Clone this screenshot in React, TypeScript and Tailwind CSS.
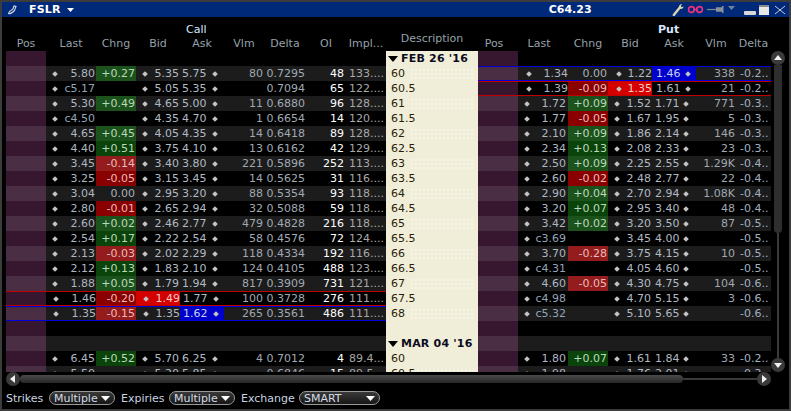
import { ReactNode } from 'react';

type CallQuote = { last: string; chng: string; bid: string; ask: string; vlm: string; delta: string; oi: string; impl: string; hl?: 'bid' | 'ask' };
type PutQuote = { last: string; chng: string; bid: string; ask: string; vlm: string; delta: string; hl?: 'bid' | 'ask' };
type Row = { strike?: string; expiry?: string; call?: CallQuote; put?: PutQuote };

const q = (last: string, chng: string, bid: string, ask: string, vlm: string, delta: string, oi: string, impl: string, hl?: 'bid' | 'ask'): CallQuote => ({ last, chng, bid, ask, vlm, delta, oi, impl, hl });
const p = (last: string, chng: string, bid: string, ask: string, vlm: string, delta: string, hl?: 'bid' | 'ask'): PutQuote => ({ last, chng, bid, ask, vlm, delta, hl });

const rows: Row[] = [
  { expiry: "FEB 26 '16" },
  { strike: '60', call: q('5.80', '+0.27', '5.35', '5.75', '80', '0.7295', '48', '133....'), put: p('1.34', '0.00', '1.22', '1.46', '338', '-0.2..', 'ask') },
  { strike: '60.5', call: q('c5.17', '', '5.05', '5.35', '', '0.7094', '65', '122....'), put: p('1.39', '-0.09', '1.35', '1.61', '21', '-0.2..', 'bid') },
  { strike: '61', call: q('5.30', '+0.49', '4.65', '5.00', '11', '0.6880', '96', '128....'), put: p('1.72', '+0.09', '1.52', '1.71', '771', '-0.3..') },
  { strike: '61.5', call: q('c4.50', '', '4.35', '4.70', '1', '0.6654', '14', '120....'), put: p('1.77', '-0.05', '1.67', '1.95', '5', '-0.3..') },
  { strike: '62', call: q('4.65', '+0.45', '4.05', '4.35', '14', '0.6418', '89', '128....'), put: p('2.10', '+0.09', '1.86', '2.14', '146', '-0.3..') },
  { strike: '62.5', call: q('4.40', '+0.51', '3.75', '4.10', '13', '0.6162', '42', '129....'), put: p('2.34', '+0.13', '2.08', '2.33', '23', '-0.3..') },
  { strike: '63', call: q('3.45', '-0.14', '3.40', '3.80', '221', '0.5896', '252', '113....'), put: p('2.50', '+0.09', '2.25', '2.55', '1.29K', '-0.4..') },
  { strike: '63.5', call: q('3.25', '-0.05', '3.15', '3.45', '14', '0.5625', '31', '116....'), put: p('2.60', '-0.02', '2.48', '2.77', '22', '-0.4..') },
  { strike: '64', call: q('3.04', '0.00', '2.95', '3.20', '88', '0.5354', '93', '118....'), put: p('2.90', '+0.04', '2.70', '2.94', '1.08K', '-0.4..') },
  { strike: '64.5', call: q('2.80', '-0.01', '2.65', '2.94', '32', '0.5088', '59', '118....'), put: p('3.20', '+0.07', '2.95', '3.40', '48', '-0.4..') },
  { strike: '65', call: q('2.60', '+0.02', '2.46', '2.77', '479', '0.4828', '216', '118....'), put: p('3.42', '+0.02', '3.20', '3.50', '87', '-0.5..') },
  { strike: '65.5', call: q('2.54', '+0.17', '2.22', '2.54', '58', '0.4576', '72', '124....'), put: p('c3.69', '', '3.45', '4.00', '', '-0.5..') },
  { strike: '66', call: q('2.13', '-0.03', '2.02', '2.29', '118', '0.4334', '192', '116....'), put: p('3.70', '-0.28', '3.75', '4.15', '10', '-0.5..') },
  { strike: '66.5', call: q('2.12', '+0.13', '1.83', '2.10', '124', '0.4105', '488', '123....'), put: p('c4.31', '', '4.05', '4.60', '', '-0.5..') },
  { strike: '67', call: q('1.88', '+0.05', '1.79', '1.94', '817', '0.3909', '731', '121....'), put: p('4.60', '-0.05', '4.30', '4.75', '104', '-0.6..') },
  { strike: '67.5', call: q('1.46', '-0.20', '1.49', '1.77', '100', '0.3728', '276', '111....', 'bid'), put: p('c4.98', '', '4.70', '5.15', '3', '-0.6..') },
  { strike: '68', call: q('1.35', '-0.15', '1.35', '1.62', '265', '0.3561', '486', '111....', 'ask'), put: p('c5.32', '', '5.10', '5.65', '', '-0.6..') },
  {},
  { expiry: "MAR 04 '16" },
  { strike: '60', call: q('6.45', '+0.52', '5.70', '6.25', '4', '0.7012', '4', '89.4...'), put: p('1.80', '+0.07', '1.61', '1.84', '33', '-0.2..') },
  { strike: '60.5', call: q('5.50', '', '5.20', '5.85', '', '0.6846', '15', '89.5...'), put: p('1.98', '', '1.76', '2.01', '', '-0.3..') },
];

function Dot() {
  return <span className="size-[4px] shrink-0 rotate-45 bg-[#c4c4c4]" />;
}

function chngClass(chng: string, light: boolean) {
  if (chng.startsWith('+')) return light ? 'bg-[#1c521c] text-[#bcd8bc]' : 'bg-[#0a440a] text-[#bcd8bc]';
  if (chng.startsWith('-')) return light ? 'bg-[#951c1c] text-[#e8bcbc]' : 'bg-[#8a0000] text-[#e8bcbc]';
  return 'text-[#a9b1b9]';
}

function lastClass(last: string) {
  return last.startsWith('c') ? 'text-[#93a4b8]' : 'text-[#aeb7c0]';
}

function HlLine({ kind }: { kind?: 'bid' | 'ask' }) {
  if (!kind) return null;
  return (
    <span
      className={
        kind === 'ask'
          ? 'pointer-events-none absolute inset-0 border-y border-[#0000d8]'
          : 'pointer-events-none absolute inset-0 border-y border-[#c00000]'
      }
    />
  );
}

function CallSide({ c, light }: { c?: CallQuote; light: boolean }) {
  const hl = !!c?.hl;
  return (
    <div className={`relative flex w-[380px] shrink-0 ${light ? 'bg-[#1c1c1c]' : 'bg-black'}`}>
      <div className={`w-[40px] shrink-0 ${light ? 'bg-[#4a2e44]' : 'bg-[#37162f]'}`} />
      {c && (
        <>
          <div className={`flex w-[50px] shrink-0 items-center justify-between ${hl ? 'pl-[8px] pr-0' : 'pl-[7px] pr-[1px]'}`}>
            <Dot />
            <span className={lastClass(c.last)}>{c.last}</span>
          </div>
          <div className={`w-[40px] shrink-0 pr-[1px] text-right ${chngClass(c.chng, light)}`}>{c.chng}</div>
          <div className={`flex w-[44px] shrink-0 items-center justify-between ${hl ? 'pl-[8px] pr-0' : 'pl-[7px] pr-[1px]'} ${c.hl === 'bid' ? 'bg-[#d40000] text-[#f0c8c8]' : 'text-[#b0bac4]'}`}>
            <Dot />
            <span>{c.bid}</span>
          </div>
          <div className={`flex w-[44px] shrink-0 items-center justify-between ${hl ? 'pl-[3px] pr-[6px]' : 'pl-[2px] pr-[7px]'} ${c.hl === 'ask' ? 'bg-[#0000cc] text-[#c8d0f0]' : 'text-[#b0bac4]'}`}>
            <span>{c.ask}</span>
            <Dot />
          </div>
          <div className="w-[40px] shrink-0 pr-[1px] text-right text-[#a0a8b0]">{c.vlm}</div>
          <div className="w-[42px] shrink-0 pr-[1px] text-right text-[#a0aab4]">{c.delta}</div>
          <div className="w-[40px] shrink-0 pr-[2px] text-right text-white">{c.oi}</div>
          <div className="w-[40px] shrink-0 whitespace-nowrap pl-[3px] text-[#a8a8a8]">{c.impl}</div>
        </>
      )}
      <HlLine kind={c?.hl} />
    </div>
  );
}

function PutSide({ c, light }: { c?: PutQuote; light: boolean }) {
  const hl = !!c?.hl;
  return (
    <div className={`relative flex w-[293px] shrink-0 ${light ? 'bg-[#1c1c1c]' : 'bg-black'}`}>
      <div className={`w-[40px] shrink-0 ${light ? 'bg-[#4a2e44]' : 'bg-[#37162f]'}`} />
      {c && (
        <>
          <div className={`flex w-[50px] shrink-0 items-center justify-between ${hl ? 'pl-[9px] pr-0' : 'pl-[7px] pr-[2px]'}`}>
            <Dot />
            <span className={lastClass(c.last)}>{c.last}</span>
          </div>
          <div className={`w-[40px] shrink-0 pr-[1px] text-right ${chngClass(c.chng, light)}`}>{c.chng}</div>
          <div className={`flex w-[44px] shrink-0 items-center justify-between ${hl ? 'pl-[9px] pr-0' : 'pl-[7px] pr-[1px]'} ${c.hl === 'bid' ? 'bg-[#d40000] text-[#f0c8c8]' : 'text-[#b0bac4]'}`}>
            <Dot />
            <span>{c.bid}</span>
          </div>
          <div className={`flex w-[44px] shrink-0 items-center justify-between ${hl ? 'pl-[4px] pr-[6px]' : 'pl-[3px] pr-[8px]'} ${c.hl === 'ask' ? 'bg-[#0000cc] text-[#c8d0f0]' : 'text-[#b0bac4]'}`}>
            <span>{c.ask}</span>
            <Dot />
          </div>
          <div className="w-[40px] shrink-0 pr-[1px] text-right text-[#a0a8b0]">{c.vlm}</div>
          <div className="w-[35px] shrink-0 whitespace-nowrap pl-[4px] text-[#a0b0c2]">{c.delta}</div>
        </>
      )}
      <HlLine kind={c?.hl} />
    </div>
  );
}

function Description({ row, light }: { row: Row; light: boolean }) {
  return (
    <div className="flex w-[92px] shrink-0 items-center bg-[#f0eed8] text-[#2a1c08]">
      {row.expiry ? (
        <>
          <svg width="10" height="6" viewBox="0 0 10 6" className="ml-[2px] shrink-0">
            <path d="M0 0h10L5 6z" fill="#000" />
          </svg>
          <span className="ml-[3px] whitespace-nowrap font-bold tracking-[0.2px] text-[#0c0c20]">{row.expiry}</span>
        </>
      ) : (
        <>
          <span className="ml-[5px]">{row.strike}</span>
          {light && row.strike && (
            <span className="ml-auto mr-[3px] h-[11px] w-[65px] bg-[radial-gradient(#f7f6e6_0.8px,transparent_1px)] bg-[length:4px_4px]" />
          )}
        </>
      )}
    </div>
  );
}

function HeadCell({ w, children }: { w: string; children?: ReactNode }) {
  return <div className={`${w} shrink-0 text-center`}>{children}</div>;
}

function CircleBtn({ dir }: { dir: 'up' | 'down' | 'left' | 'right' }) {
  const d = { up: 'M5 2l4 5H1z', down: 'M1 3h8L5 8z', left: 'M7 1v8L2 5z', right: 'M3 1v8l5-4z' }[dir];
  return (
    <span className="flex size-[14px] shrink-0 items-center justify-center rounded-full bg-[#3a3a3a]">
      <svg width="10" height="10" viewBox="0 0 10 10">
        <path d={d} fill="#f2f2f2" />
      </svg>
    </span>
  );
}

function Dropdown({ label, width }: { label: string; width: string }) {
  return (
    <div className={`${width} flex h-[14px] shrink-0 items-center justify-between rounded-[7px] border border-[#9a9a9a] bg-[linear-gradient(#3a3a3a,#161616)] pl-[4px] pr-[4px] text-[#d3dce6]`}>
      <span>{label}</span>
      <svg width="9" height="5" viewBox="0 0 9 5">
        <path d="M0 0h9L4.500 5z" fill="#fff" />
      </svg>
    </div>
  );
}

function TitleIcons() {
  return (
    <div className="flex items-center">
      {/* wrench */}
      <svg width="12" height="13" viewBox="0 0 12 14">
        <path d="M1.500 13L7.500 5.500" stroke="#d8d4b0" strokeWidth="2.600" strokeLinecap="round" />
        <path d="M7 5.500C6.500 3 8 1 10.500 1L9 3l1 1.500 2-.8C11.800 6 9.500 7.500 7 5.500z" fill="#d8d4b0" />
      </svg>
      {/* link */}
      <svg width="17" height="9" viewBox="0 0 17 10" className="ml-[3px]">
        <circle cx="4" cy="5" r="3.200" fill="none" stroke="#f0327d" strokeWidth="1.700" />
        <circle cx="13" cy="5" r="3.200" fill="none" stroke="#f0327d" strokeWidth="1.700" />
        <path d="M6 5h5" stroke="#f0327d" strokeWidth="1.700" />
      </svg>
      {/* pin */}
      <svg width="17" height="7" viewBox="0 0 17 9" preserveAspectRatio="none" className="ml-[3px]">
        <path d="M0 4.500h9" stroke="#7e8690" strokeWidth="1.600" />
        <path d="M9 1.500h6V0h1.500v9H15V7.500H9z" fill="#8a9099" />
      </svg>
      <svg width="7" height="4" viewBox="0 0 7 4" className="mb-[3px] ml-[4px]">
        <path d="M0 0h7L3.500 4z" fill="#6f819b" />
      </svg>
      {/* minimize */}
      <span className="ml-[9px] mt-[7px] h-[4px] w-[12px] rounded-[1px] bg-[#d8d8d8]" />
      {/* maximize */}
      <span className="ml-[3px] h-[10px] w-[10px] border-t-[2px] border-[#8a8a8a] bg-[#e8e8e8]" />
      {/* close */}
      <svg width="12" height="10" viewBox="0 0 12 10" className="ml-[5px]">
        <path d="M1 1l10 8M11 1L1 9" stroke="#c8ccd4" strokeWidth="1" />
      </svg>
    </div>
  );
}

export default function App() {
  return (
    <div className="flex h-[411px] w-[791px] flex-col overflow-hidden border-2 border-[#3c3c3c] bg-black font-['DejaVu_Sans',sans-serif] text-[11px] leading-[15px]">
      {/* title bar */}
      <div className="flex h-[15px] shrink-0 items-center bg-[#00297a] pl-[5px] pr-[3px] text-white">
        <svg width="11" height="10" viewBox="0 0 11 10" className="shrink-0">
          <path d="M1.500 8.500c2 1 4-1 6-3l1.500-4-2-.500-1 3-3.500 2.500z" fill="none" stroke="#d5d8e0" strokeWidth="1.100" />
        </svg>
        <span className="ml-[11px] font-bold tracking-[0.2px]">FSLR</span>
        <svg width="7" height="4" viewBox="0 0 7 4" className="ml-[6px]">
          <path d="M0 0h7L3.500 4z" fill="#fff" />
        </svg>
        <span className="ml-[475px] font-bold">C64.23</span>
        <div className="ml-auto">
          <TitleIcons />
        </div>
      </div>

      {/* column headers */}
      <div className="flex h-[34px] shrink-0 pl-[4px] text-[#95a0ab]">
        <div className="w-[380px] shrink-0">
          <div className="h-[19px] pl-[180px] pt-[6px] leading-[13px] text-[#d9e6ff]">Call</div>
          <div className="flex h-[15px]">
            <HeadCell w="w-[40px]">Pos</HeadCell>
            <HeadCell w="w-[50px]">Last</HeadCell>
            <HeadCell w="w-[40px]">Chng</HeadCell>
            <HeadCell w="w-[44px]">Bid</HeadCell>
            <HeadCell w="w-[44px]">Ask</HeadCell>
            <HeadCell w="w-[40px]">Vlm</HeadCell>
            <HeadCell w="w-[42px]">Delta</HeadCell>
            <HeadCell w="w-[40px]">OI</HeadCell>
            <HeadCell w="w-[40px]">Impl...</HeadCell>
          </div>
        </div>
        <div className="w-[92px] shrink-0 pt-[14px] text-center">Description</div>
        <div className="w-[293px] shrink-0">
          <div className="h-[19px] pl-[180px] pt-[6px] font-bold leading-[13px] text-[#d9e6ff]">Put</div>
          <div className="flex h-[15px]">
            <HeadCell w="w-[32px]">Pos</HeadCell>
            <HeadCell w="w-[58px]">Last</HeadCell>
            <HeadCell w="w-[40px]">Chng</HeadCell>
            <HeadCell w="w-[44px]">Bid</HeadCell>
            <HeadCell w="w-[44px]">Ask</HeadCell>
            <HeadCell w="w-[40px]">Vlm</HeadCell>
            <HeadCell w="w-[35px]">Delta</HeadCell>
          </div>
        </div>
      </div>

      {/* chain + vertical scrollbar */}
      <div className="flex h-[321px] shrink-0 pl-[4px]">
        <div className="h-full w-[765px] shrink-0 overflow-hidden">
          {rows.map((row, i) => {
            const light = i % 2 === 1;
            return (
              <div key={i} className="flex h-[15px]">
                <CallSide c={row.call} light={light} />
                <Description row={row} light={light} />
                <PutSide c={row.put} light={light} />
              </div>
            );
          })}
        </div>
        <div className="flex w-[14px] shrink-0 flex-col items-center">
          <CircleBtn dir="up" />
          <div className="h-[168px] w-[8px] shrink-0 rounded-b-[4px] bg-[#2e2e2e]" />
          <div className="w-[2px] flex-1 bg-[#3a3a3a]" />
          <CircleBtn dir="down" />
        </div>
      </div>

      {/* horizontal scrollbar */}
      <div className="flex h-[14px] w-[769px] shrink-0 items-center pl-[4px]">
        <CircleBtn dir="left" />
        <div className="h-[8px] w-[663px] shrink-0 rounded-[4px] bg-[linear-gradient(#4a4a4a,#262626)]" />
        <div className="h-[2px] flex-1 bg-[#3a3a3a]" />
        <CircleBtn dir="right" />
      </div>

      {/* filters */}
      <div className="flex flex-1 items-center pl-[4px] pt-[1px] text-[#c8d4e0]">
        <span className="w-[43px] shrink-0">Strikes</span>
        <Dropdown label="Multiple" width="w-[66px]" />
        <span className="ml-[6px] w-[48px] shrink-0">Expiries</span>
        <Dropdown label="Multiple" width="w-[66px]" />
        <span className="ml-[6px] w-[58px] shrink-0">Exchange</span>
        <Dropdown label="SMART" width="w-[81px]" />
      </div>
    </div>
  );
}
